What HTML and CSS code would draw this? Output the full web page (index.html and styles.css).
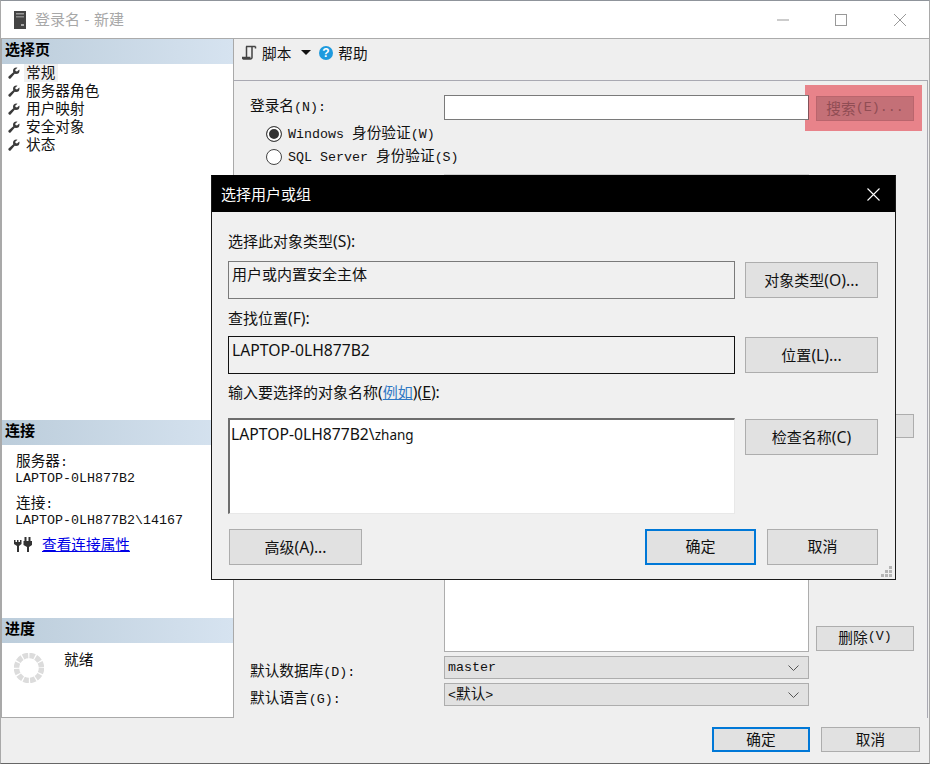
FILE: index.html
```html
<!DOCTYPE html>
<html lang="zh-CN">
<head>
<meta charset="utf-8">
<title>登录名 - 新建</title>
<link rel="stylesheet" href="styles.css">
</head>
<body>
<svg class="defs" width="0" height="0"><defs>
  <symbol id="wrench" viewBox="0 0 12 12"><path d="M8.5.5A3.5 3.5 0 0 0 5 4l.3 1.3L.8 9.2a1.4 1.4 0 0 0 2 2L6.7 6.7 8 7a3.5 3.5 0 0 0 3.5-3.5l-.2-1L9 4.5 7.5 4l-.3-1.2L9.5.7z" fill="#3a3a3a"/></symbol>
</defs></svg>
<div class="window">
  <header class="titlebar">
    <svg class="app-icon" width="12" height="18" viewBox="0 0 12 18"><rect width="12" height="18" fill="#444"/><rect x="2" y="2" width="8" height="1.5" fill="#999"/><rect x="2" y="5" width="8" height="1.5" fill="#888"/><rect x="7" y="13" width="3" height="2" fill="#aaa"/></svg>
    <span class="title-text">登录名 - 新建</span>
    <div class="win-controls">
      <svg width="12" height="12" viewBox="0 0 12 12"><path d="M0 6h12" stroke="#999"/></svg>
      <svg class="win-max" width="12" height="12" viewBox="0 0 12 12"><rect x=".5" y=".5" width="11" height="11" fill="none" stroke="#999"/></svg>
      <svg width="12" height="12" viewBox="0 0 12 12"><path d="M0 0l12 12M12 0L0 12" stroke="#999"/></svg>
    </div>
  </header>
  <div class="content">
    <aside class="sidebar">
      <section class="side-sec sec-pages">
        <h2 class="side-head">选择页</h2>
        <ul class="page-list">
          <li class="page-item"><svg class="wrench"><use href="#wrench"/></svg><span class="page-name selected">常规</span></li>
          <li class="page-item"><svg class="wrench"><use href="#wrench"/></svg><span class="page-name">服务器角色</span></li>
          <li class="page-item"><svg class="wrench"><use href="#wrench"/></svg><span class="page-name">用户映射</span></li>
          <li class="page-item"><svg class="wrench"><use href="#wrench"/></svg><span class="page-name">安全对象</span></li>
          <li class="page-item"><svg class="wrench"><use href="#wrench"/></svg><span class="page-name">状态</span></li>
        </ul>
      </section>
      <section class="side-sec sec-conn">
        <h2 class="side-head">连接</h2>
        <div class="conn-body">
          <div class="conn-label">服务器<span class="m">:</span></div>
          <div class="conn-value m">LAPTOP-0LH877B2</div>
          <div class="conn-label second">连接<span class="m">:</span></div>
          <div class="conn-value m">LAPTOP-0LH877B2\14167</div>
          <div class="conn-link-row">
            <svg width="19" height="15" viewBox="0 0 19 15"><g fill="#333"><path d="M0 3h1.500v2H3V3h1.500v2H6V3h1.500v4L5 9v6H3V9L0 7z"/><path d="M10.500 0h2v4h2V0h2v4H18v4l-3 2v5h-2v-5L9.500 8V4h1z"/></g></svg>
            <a class="conn-link" href="#">查看连接属性</a>
          </div>
        </div>
      </section>
      <section class="side-sec sec-progress">
        <h2 class="side-head">进度</h2>
        <div class="progress-body">
          <svg width="30" height="30" viewBox="0 0 30 30"><circle cx="15" cy="15" r="12.500" fill="none" stroke="#dcdcdc" stroke-width="5.500" stroke-dasharray="5.300 1.250"/></svg>
          <span class="progress-text">就绪</span>
        </div>
      </section>
    </aside>
    <main class="main">
      <div class="toolbar">
        <svg width="15" height="15" viewBox="0 0 15 15"><path d="M4 1.500h9.500M13.500 1.500v2M4.500 1.500v10.500M10 1.500v11a1.500 1.500 0 0 1-1.500 1.500h-7A1.500 1.500 0 0 1 .5 12.500h8" fill="none" stroke="#444" stroke-width="1.500"/></svg>
        <span class="tool-text">脚本</span>
        <svg class="caret" width="10" height="5" viewBox="0 0 10 5"><path d="M0 0h10L5 5z" fill="#111"/></svg>
        <svg class="help" width="14" height="14" viewBox="0 0 14 14"><circle cx="7" cy="7" r="7" fill="#1e9ade"/><text x="7" y="11" text-anchor="middle" class="help-q">?</text></svg>
        <span class="tool-text">帮助</span>
      </div>
      <div class="panel">
        <div class="row row-login">
          <label class="label login-label">登录名<span class="m">(N):</span></label>
          <div class="input input-login"></div>
        </div>
        <div class="radio-row first"><span class="radio checked"></span><span><span class="m">Windows </span>身份验证<span class="m">(W)</span></span></div>
        <div class="radio-row"><span class="radio"></span><span><span class="m">SQL Server </span>身份验证<span class="m">(S)</span></span></div>
        <div class="row row-pass"><div class="label"></div><div class="input input-pass"></div></div>
        <div class="row row-list">
          <div class="label"></div>
          <div class="list-box"></div>
          <div class="list-actions">
            <div class="btn legacy add-btn"></div>
            <div class="btn legacy del-btn">删除<span class="m">(V)</span></div>
          </div>
        </div>
        <div class="row row-combo">
          <label class="label combo-label">默认数据库<span class="m">(D):</span></label>
          <div class="combo"><span class="m">master</span><svg class="chev" width="11" height="6" viewBox="0 0 11 6"><path d="M.5.500l5 5 5-5" fill="none" stroke="#555"/></svg></div>
        </div>
        <div class="row row-combo second">
          <label class="label combo-label">默认语言<span class="m">(G):</span></label>
          <div class="combo"><span><span class="m">&lt;</span>默认<span class="m">&gt;</span></span><svg class="chev" width="11" height="6" viewBox="0 0 11 6"><path d="M.5.500l5 5 5-5" fill="none" stroke="#555"/></svg></div>
        </div>
      </div>
    </main>
  </div>
  <footer class="footer">
    <div class="btn legacy primary">确定</div>
    <div class="btn legacy">取消</div>
  </footer>

  <div class="highlight"><div class="search-btn">搜索<span class="m">(E)...</span></div></div>

  <div class="dialog">
    <div class="dlg-title">
      <span class="dlg-title-text">选择用户或组</span>
      <svg width="13" height="13" viewBox="0 0 13 13"><path d="M.5.500l12 12M12.500.500l-12 12" stroke="#fff" stroke-width="1.100"/></svg>
    </div>
    <div class="dlg-body">
      <div class="dlg-label">选择此对象类型<span class="e">(S):</span></div>
      <div class="dlg-row r1">
        <div class="dlg-field f-type">用户或内置安全主体</div>
        <div class="btn dlg-btn side">对象类型<span class="e">(O)...</span></div>
      </div>
      <div class="dlg-label l2">查找位置<span class="e">(F):</span></div>
      <div class="dlg-row r2">
        <div class="dlg-field f-loc e">LAPTOP-0LH877B2</div>
        <div class="btn dlg-btn side">位置<span class="e">(L)...</span></div>
      </div>
      <div class="dlg-label l3">输入要选择的对象名称<span class="e">(</span><a class="dlg-link" href="#">例如</a><span class="e">)(<u>E</u>):</span></div>
      <div class="dlg-row r3">
        <div class="dlg-names"><span class="e">LAPTOP-0LH877B2\</span><span class="small">zhang</span></div>
        <div class="btn dlg-btn side">检查名称<span class="e">(C)</span></div>
      </div>
      <div class="dlg-footer">
        <div class="btn dlg-btn adv">高级<span class="e">(A)...</span></div>
        <div class="dlg-actions">
          <div class="btn dlg-btn act default">确定</div>
          <div class="btn dlg-btn act">取消</div>
        </div>
      </div>
    </div>
    <svg class="grip" width="11" height="11" viewBox="0 0 11 11"><path d="M8 0h3v3H8zM4 4h3v3H4zM8 4h3v3H8zM0 8h3v3H0zM4 8h3v3H4zM8 8h3v3H8z" fill="#b5b5b5"/></svg>
  </div>
</div>
</body>
</html>
```

FILE: styles.css
```css
* { box-sizing: border-box; }
html, body { margin: 0; padding: 0; }
body { width: 930px; height: 764px; overflow: hidden; font-family: "Noto Sans CJK SC", "Liberation Sans", sans-serif; font-size: 14.67px; color: #111; }
.defs { position: absolute; }
.m { font-family: "Liberation Mono", "Noto Sans CJK SC", monospace; font-size: 13.33px; }
.e { font-family: "Noto Sans", "Noto Sans CJK SC", sans-serif; font-size: 15.7px; }
.small { font-family: "Noto Sans", sans-serif; font-size: 13.5px; }

.window { position: relative; width: 930px; height: 764px; background: #efefef; border-top: 1px solid #8f949b; border-left: 1px solid #a9a9a9; border-right: 1px solid #a9a9a9; border-bottom: 1px solid #666; display: flex; flex-direction: column; }

.titlebar { flex: none; height: 38px; background: #fff; border-bottom: 1px solid #ababab; display: flex; align-items: center; padding-left: 13px; }
.app-icon { margin-right: 9px; }
.title-text { color: #a8a8a8; font-size: 15px; line-height: 20px; padding-bottom: 2px; word-spacing: 1px; }
.win-controls { margin-left: auto; display: flex; gap: 46px; padding-right: 23px; }
.win-max { margin-right: 1px; }

.content { flex: none; height: 679px; display: flex; }
.sidebar { flex: none; width: 233px; height: 679px; background: #fff; border-left: 1px solid #a9a9a9; border-right: 1px solid #a9a9a9; border-bottom: 1px solid #a9a9a9; display: flex; flex-direction: column; }
.side-sec { flex: none; }
.sec-pages { height: 381px; }
.sec-conn { height: 198px; }
.sec-progress { flex: 1; }
.side-head { margin: 0; height: 25px; padding-left: 3px; font-size: 15px; font-weight: 700; line-height: 19px; color: #000; background: linear-gradient(90deg, #bccddb, #d6e3f0); }
.page-list { margin: 0; padding: 0; list-style: none; }
.page-item { height: 18px; display: flex; align-items: center; }
.wrench { width: 12px; height: 12px; margin-left: 6px; margin-right: 4px; flex: none; }
.page-name { padding: 0 3px 2px 2px; line-height: 16px; }
.selected { background: #f0f0f0; }

.conn-body { padding: 6px 0 0 13px; }
.conn-label { line-height: 18px; padding-left: 1px; }
.conn-label.second { margin-top: 7px; }
.conn-value { line-height: 14px; }
.conn-link-row { display: flex; align-items: center; gap: 9px; margin-top: 6px; margin-left: -1px; }
.conn-link { color: #0000e6; text-decoration: underline; line-height: 20px; }
.progress-body { display: flex; align-items: flex-start; padding: 10px 0 0 12px; }
.progress-text { margin-left: 20px; line-height: 18px; margin-top: -3px; }

.main { flex: 1; min-width: 0; display: flex; flex-direction: column; }
.toolbar { flex: none; height: 41px; display: flex; align-items: center; padding: 2px 0 16px 8px; }
.tool-text { line-height: 20px; }
.toolbar svg:first-child { margin-right: 5px; }
.caret { margin: 0 8px 0 10px; }
.help { margin-right: 5px; }
.help-q { font-family: "Liberation Sans", sans-serif; font-size: 12px; font-weight: 700; fill: #fff; }

.panel { flex: 1; margin-right: 1px; border-top: 1px solid #a9a9b2; border-right: 1px solid #a9a9b2; padding: 14px 0 0 16px; }
.row { display: flex; align-items: center; }
.label { flex: none; width: 194px; line-height: 20px; }
.login-label { padding-bottom: 2px; }
.input { width: 365px; background: #fff; border: 1px solid #7a7a7a; }
.input-login { position: relative; z-index: 2; height: 25px; border-right-color: #82525a; }
.input-pass { height: 24px; border-color: #cfcfcf; }
.row-pass { margin-top: 6px; }
.radio-row { display: flex; align-items: center; height: 23px; padding-left: 16px; gap: 6px; line-height: 20px; }
.radio-row.first { margin-top: 2px; }
.radio { width: 16px; height: 16px; border-radius: 50%; background: #fff; border: 1px solid #444; }
.radio.checked { background: #333; box-shadow: inset 0 0 0 2px #fff; }

.row-list { margin-top: 216px; align-items: stretch; height: 238px; }
.list-box { width: 365px; background: #fff; border: 1px solid #adadad; }
.list-actions { margin-left: 7px; width: 98px; display: flex; flex-direction: column; justify-content: space-between; padding-bottom: 1px; }
.btn { display: flex; align-items: center; justify-content: center; background: #e1e1e1; border: 1px solid #adadad; }
.legacy { width: 98px; height: 25px; line-height: 20px; padding-bottom: 2px; }
.add-btn { height: 24px; }
.del-btn { padding-bottom: 3px; }
.row-combo { margin-top: 4px; }
.combo-label { height: 23px; line-height: 18px; padding-top: 5px; }
.combo { width: 365px; height: 23px; background: #e1e1e1; border: 1px solid #adadad; padding: 0 9px 0 3px; display: flex; align-items: center; justify-content: space-between; line-height: 20px; }

.footer { flex: 1; display: flex; justify-content: flex-end; gap: 11px; padding: 9px 9px 0 0; background: #efefef; }
.footer .btn:last-child { width: 99px; }
.primary { border: 2px solid #0078d7; }

.highlight { position: absolute; left: 804px; top: 84px; width: 117px; height: 46px; z-index: 1; background: #e8838a; display: flex; align-items: center; justify-content: center; padding-left: 11px; padding-right: 8px; }
.search-btn { width: 98px; height: 25px; background: #c47077; border: 1px solid #b9656d; color: #904d54; display: flex; align-items: center; justify-content: center; line-height: 20px; padding-bottom: 1px; }

.dialog { position: absolute; left: 210px; top: 174px; width: 685px; height: 405px; z-index: 3; background: #f0f0f0; border: 1px solid #1a1a1a; border-top-color: #000; }
.dlg-title { height: 36px; background: #000; color: #fff; display: flex; align-items: center; justify-content: space-between; padding: 0 15px 0 9px; font-size: 15px; }
.dlg-title-text { padding-bottom: 2px; }
.dlg-body { padding: 19px 17px 0 16px; font-family: "Noto Sans CJK SC", sans-serif; font-size: 15px; }
.dlg-label { height: 20px; line-height: 20px; white-space: nowrap; }
.dlg-label.l3 { line-height: 18px; }
.dlg-row { display: flex; justify-content: space-between; align-items: flex-start; }
.r1 { margin-top: 10px; }
.l2 { margin-top: 9px; }
.r2 { margin-top: 8px; }
.l3 { margin-top: 9px; }
.r3 { margin-top: 15px; }
.dlg-field { width: 507px; height: 38px; padding: 2px 3px; line-height: 20px; border: 1px solid #7a7a7a; }
.f-type { background: #f0f0f0; }
.f-loc { border-color: #111; padding-top: 3px; }
.dlg-btn { height: 36px; line-height: 20px; }
.side { width: 133px; margin-top: 1px; }
.dlg-link { color: #2f78c4; text-decoration: underline; }
.dlg-names { width: 507px; height: 96px; background: #fff; border: 1px solid #e8e8e8; border-top: 2px solid #6d6d6d; border-left: 2px solid #6d6d6d; padding: 4px 1px; line-height: 20px; }
.dlg-footer { margin-top: 15px; padding-left: 1px; display: flex; justify-content: space-between; }
.adv { width: 133px; }
.dlg-actions { display: flex; gap: 11px; }
.act { width: 111px; padding-bottom: 2px; }
.default { border: 2px solid #0078d7; }
.grip { position: absolute; right: 3px; bottom: 2px; }
```
